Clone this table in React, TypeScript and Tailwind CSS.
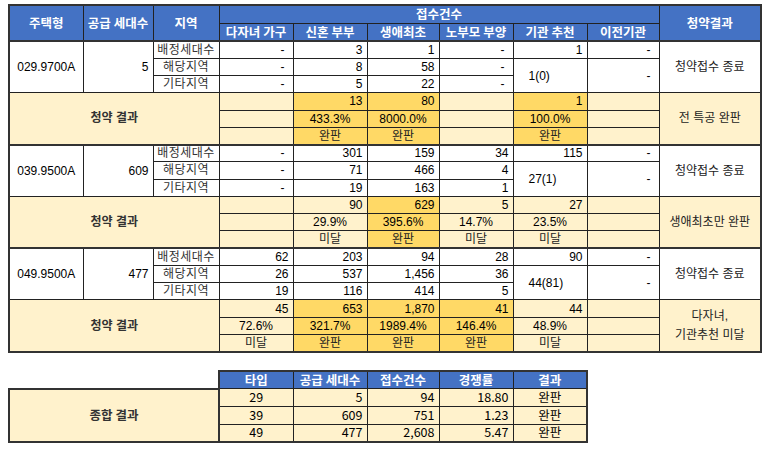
import React from "react";

type Group = {
  type: string;
  supply: string;
  rows: { region: string; vals: string[] }[];
  merged: [string, string];
  status: string;
  counts: string[];
  pcts: string[];
  verdicts: string[];
  gold: boolean[];
  final: string[];
};

const groups: Group[] = [
  {
    type: "029.9700A",
    supply: "5",
    rows: [
      { region: "배정세대수", vals: ["-", "3", "1", "-", "1", "-"] },
      { region: "해당지역", vals: ["-", "8", "58", "-"] },
      { region: "기타지역", vals: ["-", "5", "22", "-"] },
    ],
    merged: ["1(0)", "-"],
    status: "청약접수 종료",
    counts: ["", "13", "80", "", "1", ""],
    pcts: ["", "433.3%", "8000.0%", "", "100.0%", ""],
    verdicts: ["", "완판", "완판", "", "완판", ""],
    gold: [false, true, true, false, true, false],
    final: ["전 특공 완판"],
  },
  {
    type: "039.9500A",
    supply: "609",
    rows: [
      { region: "배정세대수", vals: ["-", "301", "159", "34", "115", "-"] },
      { region: "해당지역", vals: ["-", "71", "466", "4"] },
      { region: "기타지역", vals: ["-", "19", "163", "1"] },
    ],
    merged: ["27(1)", "-"],
    status: "청약접수 종료",
    counts: ["", "90", "629", "5", "27", ""],
    pcts: ["", "29.9%", "395.6%", "14.7%", "23.5%", ""],
    verdicts: ["", "미달", "완판", "미달", "미달", ""],
    gold: [false, false, true, false, false, false],
    final: ["생애최초만 완판"],
  },
  {
    type: "049.9500A",
    supply: "477",
    rows: [
      { region: "배정세대수", vals: ["62", "203", "94", "28", "90", "-"] },
      { region: "해당지역", vals: ["26", "537", "1,456", "36"] },
      { region: "기타지역", vals: ["19", "116", "414", "5"] },
    ],
    merged: ["44(81)", "-"],
    status: "청약접수 종료",
    counts: ["45", "653", "1,870", "41", "44", ""],
    pcts: ["72.6%", "321.7%", "1989.4%", "146.4%", "48.9%", ""],
    verdicts: ["미달", "완판", "완판", "완판", "미달", ""],
    gold: [false, true, true, true, false, false],
    final: ["다자녀,", "기관추천 미달"],
  },
];

const summary = [
  ["29", "5", "94", "18.80", "완판"],
  ["39", "609", "751", "1.23", "완판"],
  ["49", "477", "2,608", "5.47", "완판"],
];

const cats = ["다자녀 가구", "신혼 부부", "생애최초", "노부모 부양", "기관 추천", "이전기관"];

const bd = "border border-[#222] p-0";
const cell = `${bd} leading-none`;
const th = "border border-[#222] bg-[#4472c4] p-0 text-center font-bold text-white leading-none";

function Num({ v, top }: { v: string; top?: boolean }) {
  const dash = v === "-";
  return (
    <td
      className={`${cell} text-right ${dash ? "pr-[8px]" : "pr-[4px]"} ${top ? "border-t-2 border-t-[#333]" : ""}`}
    >
      {v}
    </td>
  );
}

function GroupRows({ g }: { g: Group }) {
  const bg = (i: number) => (g.gold[i] ? "bg-[#ffd966]" : "bg-[#fff2cc]");
  return (
    <>
      {g.rows.map((r, ri) => (
        <tr key={ri} className="h-[17.28px]">
          {ri === 0 && (
            <>
              <td rowSpan={3} className={`${cell} border-t-2 border-t-[#333] text-center`}>
                {g.type}
              </td>
              <td rowSpan={3} className={`${cell} border-t-2 border-t-[#333] pr-[4px] text-right`}>
                {g.supply}
              </td>
            </>
          )}
          <td
            className={`${cell} text-center tracking-[0.5px] text-[#333] ${ri === 0 ? "border-t-2 border-t-[#333]" : ""}`}
          >
            {r.region}
          </td>
          {r.vals.map((v, vi) => (
            <Num key={vi} v={v} top={ri === 0} />
          ))}
          {ri === 1 && (
            <>
              <td rowSpan={2} className={`${cell} pl-[15px] text-left`}>
                {g.merged[0]}
              </td>
              <td rowSpan={2} className={`${cell} pr-[8px] text-right`}>
                {g.merged[1]}
              </td>
            </>
          )}
          {ri === 0 && (
            <td rowSpan={3} className={`${cell} border-t-2 border-t-[#333] text-center text-[#222]`}>
              {g.status}
            </td>
          )}
        </tr>
      ))}
      <tr className="h-[17.28px]">
        <td colSpan={3} rowSpan={3} className={`${cell} bg-[#fff2cc] text-center font-bold text-[#333]`}>
          청약 결과
        </td>
        {g.counts.map((v, i) => (
          <td key={i} className={`${cell} ${bg(i)} pr-[4px] text-right`}>
            {v}
          </td>
        ))}
        <td rowSpan={3} className={`${bd} bg-[#fff2cc] text-center leading-[19px] text-[#222]`}>
          {g.final.map((f, i) => (
            <div key={i}>{f}</div>
          ))}
        </td>
      </tr>
      <tr className="h-[17.28px]">
        {g.pcts.map((v, i) => (
          <td key={i} className={`${cell} ${bg(i)} text-center`}>
            {v}
          </td>
        ))}
      </tr>
      <tr className="h-[17.28px]">
        {g.verdicts.map((v, i) => (
          <td key={i} className={`${cell} ${bg(i)} text-center text-[#222]`}>
            {v}
          </td>
        ))}
      </tr>
    </>
  );
}

export default function App() {
  return (
    <div className="min-h-[449px] w-[773px] bg-white pl-[8px] pt-[4px] font-['Liberation_Sans','Noto_Sans_CJK_KR',sans-serif] text-[12px] text-black">
      <table className="w-[752px] table-fixed border-collapse border-2 border-[#333]">
        <colgroup>
          <col className="w-[74px]" />
          <col className="w-[70px]" />
          <col className="w-[66px]" />
          <col className="w-[74px]" />
          <col className="w-[74px]" />
          <col className="w-[72px]" />
          <col className="w-[74px]" />
          <col className="w-[74px]" />
          <col className="w-[72px]" />
          <col className="w-[102px]" />
        </colgroup>
        <thead className="font-['Noto_Sans_CJK_KR',sans-serif] text-[12.5px]">
          <tr className="h-[18px]">
            <th rowSpan={2} className={th}>주택형</th>
            <th rowSpan={2} className={th}>공급 세대수</th>
            <th rowSpan={2} className={th}>지역</th>
            <th colSpan={6} className={th}>접수건수</th>
            <th rowSpan={2} className={th}>청약결과</th>
          </tr>
          <tr className="h-[18px]">
            {cats.map((c) => (
              <th key={c} className={th}>{c}</th>
            ))}
          </tr>
        </thead>
        <tbody>
          {groups.map((g) => (
            <GroupRows key={g.type} g={g} />
          ))}
        </tbody>
      </table>

      <table className="mt-[17px] w-[578px] table-fixed border-collapse font-['Noto_Sans_CJK_KR',sans-serif] text-[12.5px]">
        <colgroup>
          <col className="w-[210px]" />
          <col className="w-[74px]" />
          <col className="w-[74px]" />
          <col className="w-[72px]" />
          <col className="w-[74px]" />
          <col className="w-[74px]" />
        </colgroup>
        <thead>
          <tr className="h-[18px]">
            <th className="border-0 p-0"></th>
            {["타입", "공급 세대수", "접수건수", "경쟁률", "결과"].map((h, i) => (
              <th
                key={h}
                className={`${th} border-t-2 border-t-[#333] ${i === 0 ? "border-l-2 border-l-[#333]" : ""} ${i === 4 ? "border-r-2 border-r-[#333]" : ""}`}
              >
                {h}
              </th>
            ))}
          </tr>
        </thead>
        <tbody>
          {summary.map((r, ri) => (
            <tr key={ri} className="h-[17.67px]">
              {ri === 0 && (
                <td rowSpan={3} className={`${cell} border-2 border-[#333] bg-[#fff2cc] text-center font-bold text-[#333]`}>
                  종합 결과
                </td>
              )}
              {r.map((v, i) => (
                <td
                  key={i}
                  className={`${cell} bg-[#fff2cc] ${i === 0 || i === 4 ? "text-center" : "pr-[4px] text-right"} ${ri === 2 ? "border-b-2 border-b-[#333]" : ""} ${i === 4 ? "border-r-2 border-r-[#333]" : ""}`}
                >
                  {v}
                </td>
              ))}
            </tr>
          ))}
        </tbody>
      </table>
    </div>
  );
}
